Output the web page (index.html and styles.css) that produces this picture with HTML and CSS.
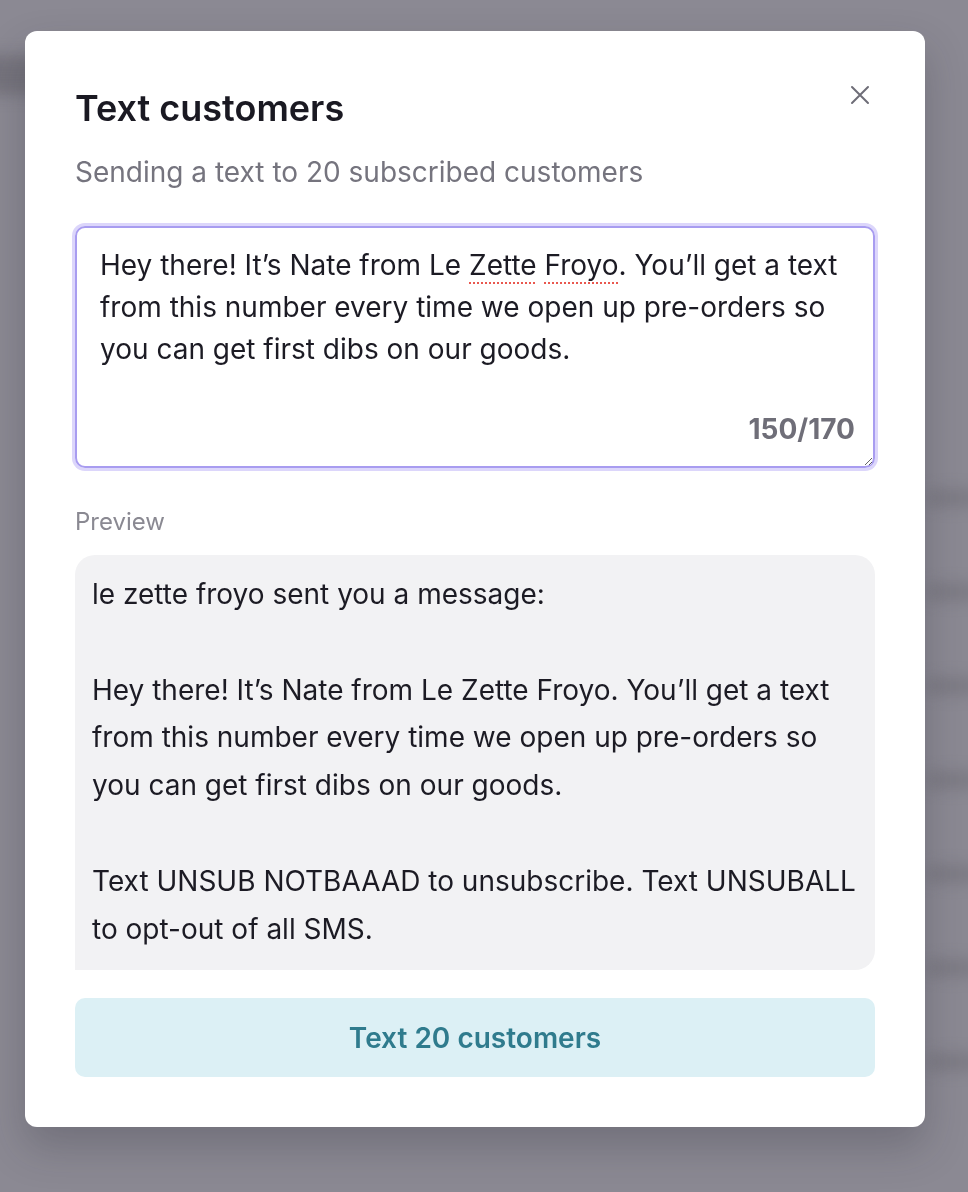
FILE: index.html
```html
<!DOCTYPE html>
<html lang="en">
<head>
<meta charset="utf-8">
<title>Text customers</title>
<link rel="stylesheet" href="styles.css">
</head>
<body>
<div class="backdrop" aria-hidden="true">
  <div class="bg-row bg-row-top"></div>
  <div class="bg-rows">
    <div class="bg-line"></div>
    <div class="bg-line"></div>
    <div class="bg-line"></div>
    <div class="bg-line"></div>
    <div class="bg-line"></div>
    <div class="bg-line"></div>
    <div class="bg-line"></div>
  </div>
</div>
<div class="overlay">
  <div class="modal" role="dialog" aria-labelledby="modal-title">
    <button class="close" aria-label="Close">
      <svg width="20" height="20" viewBox="0 0 20 20" fill="none" stroke="currentColor" stroke-width="2" stroke-linecap="round"><path d="M2 2 L18 18 M18 2 L2 18"/></svg>
    </button>
    <h1 class="title" id="modal-title">Text customers</h1>
    <p class="subtitle">Sending a text to 20 subscribed customers</p>
    <div class="field">
      <div class="textarea" contenteditable="true" spellcheck="false">Hey there! It’s Nate from Le <span class="typo">Zette</span> <span class="typo">Froyo</span>. You’ll get a text from this number every time we open up pre-orders so you can get first dibs on our goods.</div>
      <span class="counter">150/170</span>
    </div>
    <div class="preview-label">Preview</div>
    <div class="preview">le zette froyo sent you a message:

Hey there! It’s Nate from Le Zette Froyo. You’ll get a text from this number every time we open up pre-orders so you can get first dibs on our goods.

Text UNSUB NOTBAAAD to unsubscribe. Text UNSUBALL to opt-out of all SMS.</div>
    <button class="primary">Text 20 customers</button>
  </div>
</div>
</body>
</html>
```

FILE: styles.css
```css
* { box-sizing: border-box; }

html, body {
  margin: 0;
  padding: 0;
  height: 100%;
}

body {
  background: #8b8993;
  font-family: Inter, "Noto Sans", "Liberation Sans", sans-serif;
  font-optical-sizing: none;
  color: #1b1a22;
  overflow: hidden;
}

.backdrop {
  position: fixed;
  inset: 0;
  filter: blur(8px);
}

.bg-row-top {
  height: 40px;
  width: 120px;
  margin: 55px 0 0 -40px;
  background: #75737c;
  border-radius: 8px;
}

.bg-rows {
  display: flex;
  flex-direction: column;
  align-items: flex-end;
  gap: 78px;
  margin-top: 395px;
}

.bg-line {
  width: 50px;
  height: 16px;
  background: #7a7881;
  margin-right: -10px;
}

.overlay {
  position: fixed;
  inset: 0;
  padding: 31px 43px 0 25px;
}

.modal {
  position: relative;
  width: 900px;
  height: 1096px;
  background: #ffffff;
  border-radius: 12px;
  padding: 55px 50px 50px;
  box-shadow: 0 20px 40px rgba(40, 38, 50, 0.25);
  display: flex;
  flex-direction: column;
}

.close {
  position: absolute;
  top: 54px;
  right: 55px;
  width: 20px;
  height: 20px;
  padding: 0;
  border: 0;
  background: none;
  color: #6e6d77;
  cursor: pointer;
}

.close svg { display: block; }

.title {
  margin: 0;
  font-size: 36px;
  line-height: 44px;
  font-weight: 600;
  color: #1a1922;
}

.subtitle {
  margin: 24px 0 0;
  font-size: 28px;
  line-height: 36px;
  color: #75747e;
}

.field {
  position: relative;
  margin-top: 36px;
}

.textarea {
  height: 242px;
  border: 2px solid #a89cf0;
  border-radius: 10px;
  box-shadow: 0 0 0 3px #dcd6fb;
  padding: 16px 20px 0 23px;
  font-size: 28px;
  line-height: 42px;
  color: #1c1b24;
  outline: none;
  resize: vertical;
  overflow: auto;
}

.typo {
  text-decoration: underline dotted #e9584f;
  text-decoration-thickness: 2px;
  text-underline-offset: 7px;
}

.counter {
  position: absolute;
  right: 20px;
  bottom: 21px;
  font-size: 28px;
  line-height: 36px;
  font-weight: 700;
  color: #6f6e78;
}

.preview-label {
  margin-top: 40px;
  font-size: 24px;
  line-height: 28px;
  color: #8a8992;
}

.preview {
  margin-top: 19px;
  background: #f2f2f4;
  border-radius: 20px 20px 20px 0;
  padding: 16px 17px 17px;
  font-size: 28px;
  line-height: 47.8px;
  color: #1c1b24;
  white-space: pre-line;
}

.primary {
  margin-top: 28px;
  height: 80px;
  width: 100%;
  border: 0;
  border-radius: 10px;
  background: #dcf0f5;
  color: #2f7b8d;
  font-family: inherit;
  font-optical-sizing: none;
  font-size: 28px;
  font-weight: 600;
  cursor: pointer;
}
```
